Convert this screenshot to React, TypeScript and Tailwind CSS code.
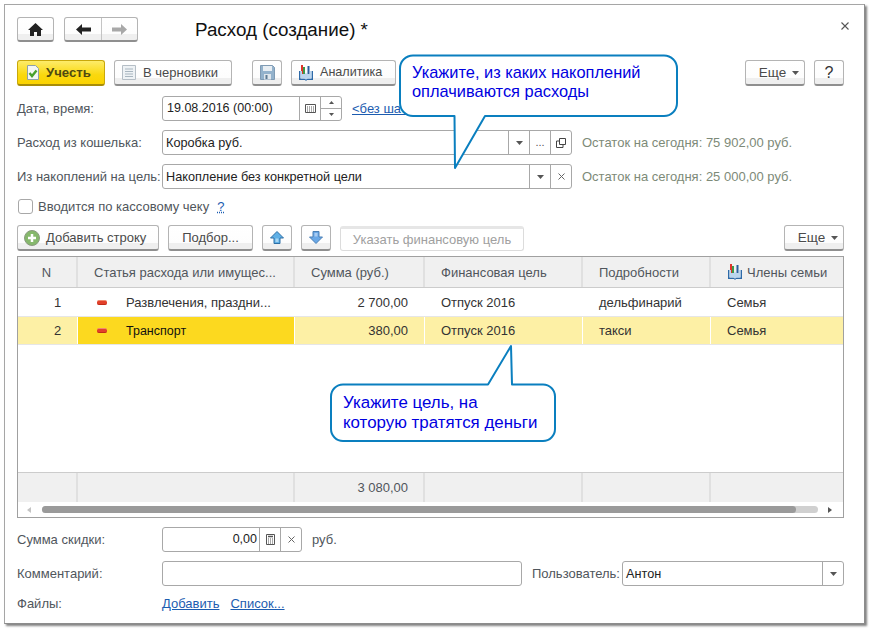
import React from "react";

const btn = "relative flex items-center justify-center shrink-0 rounded-[3px] border border-[#b4b4b4] border-b-[#8f8f8f] border-b-2 bg-[linear-gradient(#ffffff_0%,#fdfdfd_72%,#efefef_74%,#efefef_100%)] text-[#4a4a4a]";

function Caret() {
  return <svg width="7" height="4" viewBox="0 0 7 4"><path d="M0 0h7L3.500 4z" fill="#555" /></svg>;
}
function Cross() {
  return <svg width="7" height="7" viewBox="0 0 7 7"><path d="M.5.5l6 6M6.500.5l-6 6" stroke="#666" strokeWidth="1" /></svg>;
}
function Book() {
  return (
    <svg width="16" height="16" viewBox="0 0 16 16">
      <rect x="3" y="0" width="2" height="9" fill="#e0352b" />
      <rect x="5" y="2" width="2" height="7" fill="#3c9a4a" />
      <rect x="9.500" y="1" width="2" height="8" fill="#2a5f9e" />
      <path d="M1 6v9h6l1 1 1-1h6V6h-1.500v7.500H9.500L8 14.500 6.500 13.500H2.500V6z" fill="#2e6aa8" />
      <path d="M2.500 6v7.500h4l1.500 1V7.500L7 9H4V6zM13.500 6v7.500h-4l-1.500 1V7.500L9 9h3V6z" fill="#bcd6ee" />
    </svg>
  );
}
function Minus() {
  return (
    <span className="block w-[10px] h-[5px] rounded-[2px] bg-[#e2402a] border-t border-t-[#f08a70] border-b border-b-[#c22a18]" />
  );
}
function Cell({ w, right, className = "", children }: { w: string; right?: boolean; className?: string; children?: React.ReactNode }) {
  return (
    <div className={`${w} flex items-center shrink-0 h-full ${right ? "justify-end" : ""} ${className}`}>{children}</div>
  );
}
function Row({ label, h = "h-[25px]", children, mt }: { label: string; h?: string; children: React.ReactNode; mt: string }) {
  return (
    <div className={`flex items-center ${h} ${mt}`}>
      <div className="w-[145px] shrink-0 text-[#50565c] whitespace-nowrap">{label}</div>
      {children}
    </div>
  );
}
const field = "flex items-stretch h-full rounded-[3px] border border-[#a8a8a8] bg-white overflow-hidden";
const seg = "flex items-center justify-center border-l border-[#a8a8a8] w-[21px] shrink-0";
const value = "flex-1 flex items-center pl-[3px] pt-[1px] text-[#222] text-[12.700px]";
const sep = "border-r-2 border-[#e0e0e0]";

export default function App() {
  return (
    <div className="relative w-[869px] h-[629px] bg-white overflow-hidden text-[13px] leading-none text-[#333] font-['Liberation_Sans',Arial,sans-serif]">
      <div className="absolute left-[4px] top-[4px] w-[861px] h-[620px] bg-white border border-[#a6a6a6] border-r-[#8c8c8c] border-b-[#8c8c8c] shadow-[2px_2px_2px_rgba(90,90,90,0.75)] pl-[12px] pr-[20px] pt-[12px] flex flex-col">
        {/* Top navigation */}
        <div className="flex items-center h-[25px] relative">
          <div className={`${btn} w-[37px] h-full`}>
            <svg width="15" height="13" viewBox="0 0 15 13"><path d="M7.500 0L15 7h-2v6H9V9H6v4H2V7H0z" fill="#222" /></svg>
          </div>
          <div className={`${btn} w-[74px] h-full ml-[10px] !justify-start`}>
            <div className="w-[37px] h-full flex items-center justify-center border-r border-[#c4c4c4]">
              <svg width="15" height="11" viewBox="0 0 15 11"><path d="M0 5.500L6 0v3.500h9v4H6V11z" fill="#222" /></svg>
            </div>
            <div className="flex-1 flex items-center justify-center">
              <svg width="15" height="11" viewBox="0 0 15 11"><path d="M15 5.500L9 0v3.500H0v4h9V11z" fill="#a8a8a8" /></svg>
            </div>
          </div>
          <div className="ml-[57px] mt-[2px] text-[18.800px] text-[#111] whitespace-nowrap">Расход (создание) *</div>
          <div className="ml-auto mr-[-5px] mt-[-8px] text-[#555]">
            <svg width="8" height="8" viewBox="0 0 8 8"><path d="M.5.5l7 7M7.500.5l-7 7" stroke="#555" strokeWidth="1.100" /></svg>
          </div>
        </div>

        {/* Command bar */}
        <div className="flex items-center h-[26px] mt-[18px]">
          <div className="flex items-center justify-start pl-[8px] gap-[6px] w-[88px] h-full shrink-0 rounded-[3px] border border-[#c9a80a] border-b-2 border-b-[#a88d08] bg-[linear-gradient(#fdec6a,#fad80e_60%,#fbd300)] font-bold text-[#4f4a10] text-[13.200px]">
            <svg width="14" height="15" viewBox="0 0 14 15"><path d="M1.500.5h8l3 3v11h-11z" fill="#f4f6f4" stroke="#8fa0a8" /><path d="M3.500 8l2.500 3 4.500-5.500" fill="none" stroke="#4aa02c" strokeWidth="2.400" /></svg>
            Учесть
          </div>
          <div className={`${btn} w-[118px] h-full ml-[9px] gap-[7px] !justify-start pl-[7px]`}>
            <svg width="14" height="15" viewBox="0 0 14 15"><path d="M.5.500h13v14H.5z" fill="#eef2f5" stroke="#b5bec6" /><path d="M3 4h8M3 6.500h8M3 9h8M3 11.500h8" stroke="#a9b6c0" /></svg>
            В черновики
          </div>
          <div className={`${btn} w-[30px] h-full ml-[20px]`}>
            <svg width="15" height="15" viewBox="0 0 15 15"><path d="M.5.500h12l2 2v12H.5z" fill="#93b2cc" stroke="#7f9bb4" /><rect x="3" y="1" width="9" height="5" fill="#e8eef3" /><rect x="4" y="9" width="7" height="5.500" fill="#dfe6ec" /><rect x="5.500" y="10" width="2" height="4" fill="#5c7a94" /></svg>
          </div>
          <div className={`${btn} w-[105px] h-full ml-[9px] gap-[6px] !justify-start pl-[6px] text-[12.600px]`}>
            <Book />
            Аналитика
          </div>
          <div className={`${btn} w-[60px] h-full ml-auto gap-[6px] text-[13.500px] pl-[8px]`}>Еще <Caret /></div>
          <div className={`${btn} w-[30px] h-full ml-[9px] text-[16px] text-[#333]`}>?</div>
        </div>

        <Row label="Дата, время:" mt="mt-[10px]">
          <div className={`${field} w-[180px]`}>
            <div className="flex-1 flex items-center pl-[4px] text-[#222] text-[12.500px]">19.08.2016 (00:00)</div>
            <div className={seg}>
              <svg width="11" height="9" viewBox="0 0 11 9"><path d="M.5.500h10v8H.5z" fill="#fff" stroke="#555" /><path d="M2 3h7M2 5h7M2 7h7" stroke="#555" strokeDasharray="1 1" /></svg>
            </div>
            <div className={`${seg} flex-col !justify-stretch`}>
              <div className="flex-1 w-full flex items-center justify-center border-b border-[#a8a8a8]"><svg width="5" height="3" viewBox="0 0 5 3"><path d="M0 3h5L2.500 0z" fill="#555" /></svg></div>
              <div className="flex-1 w-full flex items-center justify-center"><svg width="5" height="3" viewBox="0 0 5 3"><path d="M0 0h5L2.500 3z" fill="#555" /></svg></div>
            </div>
          </div>
          <a className="ml-[10px] text-[#1c5cb0] underline whitespace-nowrap">&lt;без шаблона&gt;</a>
        </Row>

        <Row label="Расход из кошелька:" mt="mt-[9px]">
          <div className={`${field} w-[410px]`}>
            <div className={value}>Коробка руб.</div>
            <div className={seg}><Caret /></div>
            <div className={`${seg} !items-end pb-[6px] text-[#555] text-[11px]`}>...</div>
            <div className={seg}>
              <svg width="10" height="10" viewBox="0 0 10 10"><path d="M3.500.5h6v6h-6zM3.500 3H.5v6.500h6.500V6.500" fill="none" stroke="#444" /></svg>
            </div>
          </div>
          <div className="ml-[10px] text-[#7d8a78] whitespace-nowrap">Остаток на сегодня: 75 902,00 руб.</div>
        </Row>

        <Row label="Из накоплений на цель:" mt="mt-[9px]">
          <div className={`${field} w-[410px]`}>
            <div className={value}>Накопление без конкретной цели</div>
            <div className={seg}><Caret /></div>
            <div className={seg}><Cross /></div>
          </div>
          <div className="ml-[10px] text-[#7d8a78] whitespace-nowrap">Остаток на сегодня: 25 000,00 руб.</div>
        </Row>

        <div className="flex items-center h-[15px] mt-[10px] pl-[1px] text-[#50565c]">
          <span className="block w-[15px] h-[15px] rounded-[3px] border border-[#a8a8a8] bg-white" />
          <span className="ml-[5px] whitespace-nowrap">Вводится по кассовому чеку</span>
          <a className="ml-[8px] text-[#1c5cb0] underline decoration-dotted">?</a>
        </div>

        {/* Table toolbar */}
        <div className="flex items-center h-[26px] mt-[11px]">
          <div className={`${btn} w-[142px] h-full gap-[6px] !justify-start pl-[6px]`}>
            <svg width="16" height="16" viewBox="0 0 16 16"><circle cx="8" cy="8" r="7.500" fill="#86b86c" stroke="#8a9a80" /><path d="M8 4v8M4 8h8" stroke="#fff" strokeWidth="2.500" /></svg>
            Добавить строку
          </div>
          <div className={`${btn} w-[85px] h-full ml-[9px]`}>Подбор...</div>
          <div className={`${btn} w-[30px] h-full ml-[9px]`}>
            <svg width="14" height="13" viewBox="0 0 14 13"><path d="M7 .5L13.500 7H10v5.500H4V7H.5z" fill="#5fb0e6" stroke="#2e6fa5" /><path d="M5.500 7.500h3v3.500h-3z" fill="#a9d6f2" /></svg>
          </div>
          <div className={`${btn} w-[30px] h-full ml-[9px]`}>
            <svg width="14" height="13" viewBox="0 0 14 13"><path d="M7 12.500L13.500 6H10V.5H4V6H.5z" fill="#6aa8e6" stroke="#4a7fb5" /><path d="M5.500 2h3v3.500h-3z" fill="#a9ccf2" /></svg>
          </div>
          <div className="flex items-center justify-center w-[184px] h-[25px] ml-[9px] shrink-0 rounded-[3px] border border-[#dcdcdc] border-t-[3px] border-t-[#e6e6e6] text-[#a0a0a0] whitespace-nowrap">Указать финансовую цель</div>
          <div className={`${btn} w-[60px] h-full ml-auto gap-[6px] text-[13.500px] pl-[8px] pt-[1px]`}>Еще <Caret /></div>
        </div>

        {/* Table */}
        <div className="mt-[5px] h-[262px] w-[827px] border border-[#a0a0a0] flex flex-col">
          <div className="flex h-[31px] shrink-0 bg-[#f0f0f0] border-b border-[#cccccc] text-[#50565c]">
            <Cell w="w-[60px]" className={`justify-center pr-[1px] ${sep}`}>N</Cell>
            <Cell w="w-[217px]" className={`pl-[16px] whitespace-nowrap ${sep}`}>Статья расхода или имущес...</Cell>
            <Cell w="w-[130px]" className={`pl-[16px] ${sep}`}>Сумма (руб.)</Cell>
            <Cell w="w-[158px]" className={`pl-[16px] ${sep}`}>Финансовая цель</Cell>
            <Cell w="w-[128px]" className={`pl-[16px] ${sep}`}>Подробности</Cell>
            <Cell w="flex-1" className="pl-[16px] gap-[4px]"><Book />Члены семьи</Cell>
          </div>
          <div className="flex h-[29px] shrink-0 border-b border-[#e6e6e6] text-[#333]">
            <Cell w="w-[60px]" className="pl-[36px]">1</Cell>
            <Cell w="w-[217px]" className="pl-[19px] gap-[19px]"><Minus /><span className="whitespace-nowrap">Развлечения, праздни...</span></Cell>
            <Cell w="w-[130px]" right className="pr-[17px]">2 700,00</Cell>
            <Cell w="w-[158px]" className="pl-[16px]">Отпуск 2016</Cell>
            <Cell w="w-[128px]" className="pl-[16px]">дельфинарий</Cell>
            <Cell w="flex-1" className="pl-[16px]">Семья</Cell>
          </div>
          <div className="flex h-[28px] shrink-0 bg-[#fdf0a5] border-b border-[#e6e6e6] text-[#333]">
            <Cell w="w-[60px]" className="pl-[36px] border-r border-white">2</Cell>
            <Cell w="w-[217px]" className="pl-[19px] gap-[19px] bg-[#fcd91f] text-[#111] text-[12.500px] border-r border-white"><Minus /><span className="pt-[1px]">Транспорт</span></Cell>
            <Cell w="w-[130px]" right className="pr-[16px] border-r border-white">380,00</Cell>
            <Cell w="w-[158px]" className="pl-[16px] border-r border-white">Отпуск 2016</Cell>
            <Cell w="w-[128px]" className="pl-[16px] border-r border-white">такси</Cell>
            <Cell w="flex-1" className="pl-[16px]">Семья</Cell>
          </div>
          <div className="flex-1" />
          <div className="flex h-[30px] shrink-0 bg-[#f0f0f0] border-t border-[#cccccc] text-[#50565c]">
            <Cell w="w-[60px]" className={sep} />
            <Cell w="w-[217px]" className={sep} />
            <Cell w="w-[130px]" right className={`pr-[15px] ${sep}`}>3 080,00</Cell>
            <Cell w="w-[158px]" className={sep} />
            <Cell w="w-[128px]" className={sep} />
            <Cell w="flex-1" />
          </div>
          <div className="flex items-center h-[15px] shrink-0 pl-[9px] pr-[11px]">
            <svg width="4" height="6" viewBox="0 0 4 6"><path d="M4 0v6L0 3z" fill="#c4c4c4" /></svg>
            <div className="ml-[11px] flex-1 h-[7px] rounded-full bg-[#d0d0d0]">
              <div className="w-[754px] h-full rounded-full bg-[#9a9a9a]" />
            </div>
            <svg className="ml-[10px]" width="4" height="6" viewBox="0 0 4 6"><path d="M0 0v6l4-3z" fill="#555" /></svg>
          </div>
        </div>

        <Row label="Сумма скидки:" mt="mt-[9px]">
          <div className={`${field} w-[140px]`}>
            <div className="flex-1 flex items-center justify-end pr-[2px] text-[#222] text-[12.500px]">0,00</div>
            <div className={seg}>
              <svg width="9" height="11" viewBox="0 0 9 11"><path d="M.5.5h8v10h-8z" fill="#fff" stroke="#555" /><path d="M2 2.500h5" stroke="#555" strokeWidth="1.500" /><path d="M2 5h5M2 7h5M2 9h5" stroke="#555" strokeDasharray="1 1" /></svg>
            </div>
            <div className={seg}><Cross /></div>
          </div>
          <span className="ml-[10px] text-[#50565c]">руб.</span>
        </Row>

        <Row label="Комментарий:" mt="mt-[9px]">
          <div className={`${field} w-[360px]`} />
          <span className="ml-[10px] w-[90px] text-[#50565c] whitespace-nowrap">Пользователь:</span>
          <div className={`${field} w-[222px]`}>
            <div className={value}>Антон</div>
            <div className={seg}><Caret /></div>
          </div>
        </Row>

        <Row label="Файлы:" h="h-[16px]" mt="mt-[9px]">
          <a className="text-[#1c5cb0] underline">Добавить</a>
          <a className="ml-[11px] text-[#1c5cb0] underline">Список...</a>
        </Row>
      </div>

      {/* Callout 1 */}
      <svg className="absolute left-[390px] top-[50px]" width="295" height="125" viewBox="0 0 295 125">
        <path d="M23 5.500H274a13 13 0 0 1 13 13V53a13 13 0 0 1-13 13H95L65 118 64.500 66H23a13 13 0 0 1-13-13V18.500a13 13 0 0 1 13-13z" fill="#fff" stroke="#0a7fbf" strokeWidth="2" strokeLinejoin="round" />
      </svg>
      <div className="absolute left-[412px] top-[63px] text-[16.400px] leading-[19px] text-[#0000e0] whitespace-nowrap">
        Укажите, из каких накоплений<br />оплачиваются расходы
      </div>

      {/* Callout 2 */}
      <svg className="absolute left-[325px] top-[340px]" width="240" height="106" viewBox="0 0 240 106">
        <path d="M18 44.500H163L186 6l1 38.500H218a12 12 0 0 1 12 12V89a12 12 0 0 1-12 12H18a12 12 0 0 1-12-12V56.500a12 12 0 0 1 12-12z" fill="#fff" stroke="#0a7fbf" strokeWidth="2" strokeLinejoin="round" />
      </svg>
      <div className="absolute left-[343px] top-[393px] text-[16.900px] leading-[20px] text-[#0000e0] whitespace-nowrap">
        Укажите цель, на<br />которую тратятся деньги
      </div>
    </div>
  );
}
